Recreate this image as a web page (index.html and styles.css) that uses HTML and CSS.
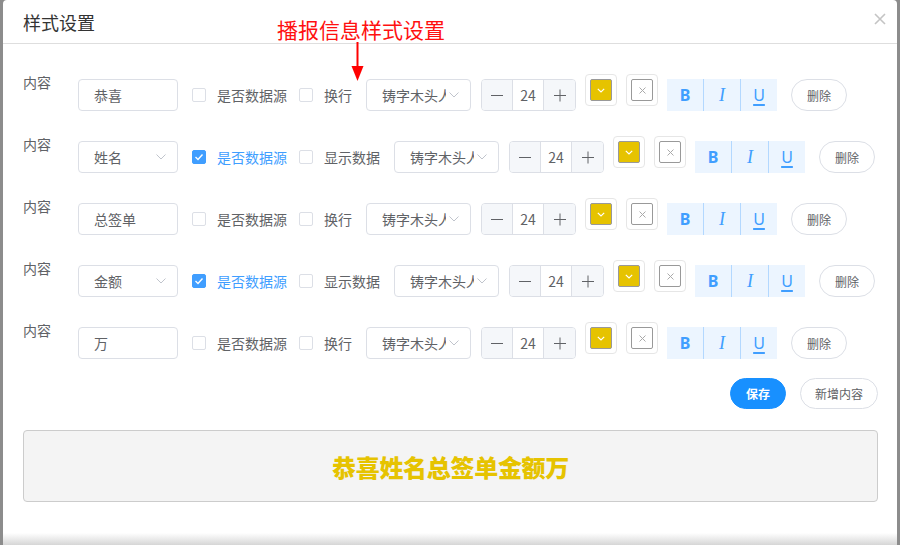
FILE: index.html
```html
<!DOCTYPE html>
<html lang="zh">
<head>
<meta charset="utf-8">
<link rel="stylesheet" href="styles.css">
</head>
<body>
<div class="dialog">
  <div class="header">
    <span class="title">样式设置</span>
    <svg class="close" width="12" height="12" viewBox="0 0 12 12"><path d="M1 1L11 11M11 1L1 11" stroke="#c4c4c4" stroke-width="1.6" fill="none"/></svg>
  </div>
  <div class="note">播报信息样式设置</div>
  <svg class="arrow" width="14" height="39" viewBox="0 0 14 39"><path d="M6.5 0V27" stroke="#f00" stroke-width="2"/><path d="M0.5 24H12.5L6.5 39Z" fill="#f00"/></svg>

  <div class="body">
    <div class="rows">
      <!-- row 1 -->
      <div class="row">
        <span class="label">内容</span>
        <div class="ctl input">恭喜</div>
        <label class="ctl check first"><span class="box"></span><span class="ctext">是否数据源</span></label>
        <label class="ctl check second"><span class="box"></span><span class="ctext">换行</span></label>
        <div class="ctl fsel"><span class="ftext">铸字木头人</span><svg class="chev" width="10" height="6" viewBox="0 0 10 6"><path d="M0.5 0.5L5 5L9.5 0.5" stroke="#c0c4cc" fill="none"/></svg></div>
        <div class="ctl num"><span class="nbtn"><svg width="14" height="14" viewBox="0 0 14 14"><path d="M1 7.5H13" stroke="#606266" stroke-width="1"/></svg></span><span class="nval">24</span><span class="nbtn plus"><svg width="14" height="14" viewBox="0 0 14 14"><path d="M1 7.5H13M7 1.5V13.5" stroke="#606266" stroke-width="1"/></svg></span></div>
        <div class="picker"><span class="swatch yellow"><svg width="8" height="5" viewBox="0 0 8 5"><path d="M0.8 0.8L4 4L7.2 0.8" stroke="#fff" stroke-width="1.2" fill="none"/></svg></span></div>
        <div class="picker"><span class="swatch empty"><svg width="7" height="7" viewBox="0 0 7 7"><path d="M0.5 0.5L6.5 6.5M6.5 0.5L0.5 6.5" stroke="#aaa" stroke-width="1" fill="none"/></svg></span></div>
        <div class="ctl biu"><span class="bb">B</span><span class="bi">I</span><span class="bu">U</span></div>
        <button class="ctl del">删除</button>
      </div>
      <!-- row 2 -->
      <div class="row">
        <span class="label">内容</span>
        <div class="ctl input sel">姓名<svg class="chev" width="10" height="6" viewBox="0 0 10 6"><path d="M0.5 0.5L5 5L9.5 0.5" stroke="#c0c4cc" fill="none"/></svg></div>
        <label class="ctl check first on"><span class="box"><svg width="10" height="8" viewBox="0 0 10 8"><path d="M1.5 4L4 6.5L8.5 1.5" stroke="#fff" stroke-width="1.4" fill="none"/></svg></span><span class="ctext">是否数据源</span></label>
        <label class="ctl check second"><span class="box"></span><span class="ctext">显示数据</span></label>
        <div class="ctl fsel"><span class="ftext">铸字木头人</span><svg class="chev" width="10" height="6" viewBox="0 0 10 6"><path d="M0.5 0.5L5 5L9.5 0.5" stroke="#c0c4cc" fill="none"/></svg></div>
        <div class="ctl num"><span class="nbtn"><svg width="14" height="14" viewBox="0 0 14 14"><path d="M1 7.5H13" stroke="#606266" stroke-width="1"/></svg></span><span class="nval">24</span><span class="nbtn plus"><svg width="14" height="14" viewBox="0 0 14 14"><path d="M1 7.5H13M7 1.5V13.5" stroke="#606266" stroke-width="1"/></svg></span></div>
        <div class="picker"><span class="swatch yellow"><svg width="8" height="5" viewBox="0 0 8 5"><path d="M0.8 0.8L4 4L7.2 0.8" stroke="#fff" stroke-width="1.2" fill="none"/></svg></span></div>
        <div class="picker"><span class="swatch empty"><svg width="7" height="7" viewBox="0 0 7 7"><path d="M0.5 0.5L6.5 6.5M6.5 0.5L0.5 6.5" stroke="#aaa" stroke-width="1" fill="none"/></svg></span></div>
        <div class="ctl biu"><span class="bb">B</span><span class="bi">I</span><span class="bu">U</span></div>
        <button class="ctl del">删除</button>
      </div>
      <!-- row 3 -->
      <div class="row">
        <span class="label">内容</span>
        <div class="ctl input">总签单</div>
        <label class="ctl check first"><span class="box"></span><span class="ctext">是否数据源</span></label>
        <label class="ctl check second"><span class="box"></span><span class="ctext">换行</span></label>
        <div class="ctl fsel"><span class="ftext">铸字木头人</span><svg class="chev" width="10" height="6" viewBox="0 0 10 6"><path d="M0.5 0.5L5 5L9.5 0.5" stroke="#c0c4cc" fill="none"/></svg></div>
        <div class="ctl num"><span class="nbtn"><svg width="14" height="14" viewBox="0 0 14 14"><path d="M1 7.5H13" stroke="#606266" stroke-width="1"/></svg></span><span class="nval">24</span><span class="nbtn plus"><svg width="14" height="14" viewBox="0 0 14 14"><path d="M1 7.5H13M7 1.5V13.5" stroke="#606266" stroke-width="1"/></svg></span></div>
        <div class="picker"><span class="swatch yellow"><svg width="8" height="5" viewBox="0 0 8 5"><path d="M0.8 0.8L4 4L7.2 0.8" stroke="#fff" stroke-width="1.2" fill="none"/></svg></span></div>
        <div class="picker"><span class="swatch empty"><svg width="7" height="7" viewBox="0 0 7 7"><path d="M0.5 0.5L6.5 6.5M6.5 0.5L0.5 6.5" stroke="#aaa" stroke-width="1" fill="none"/></svg></span></div>
        <div class="ctl biu"><span class="bb">B</span><span class="bi">I</span><span class="bu">U</span></div>
        <button class="ctl del">删除</button>
      </div>
      <!-- row 4 -->
      <div class="row">
        <span class="label">内容</span>
        <div class="ctl input sel">金额<svg class="chev" width="10" height="6" viewBox="0 0 10 6"><path d="M0.5 0.5L5 5L9.5 0.5" stroke="#c0c4cc" fill="none"/></svg></div>
        <label class="ctl check first on"><span class="box"><svg width="10" height="8" viewBox="0 0 10 8"><path d="M1.5 4L4 6.5L8.5 1.5" stroke="#fff" stroke-width="1.4" fill="none"/></svg></span><span class="ctext">是否数据源</span></label>
        <label class="ctl check second"><span class="box"></span><span class="ctext">显示数据</span></label>
        <div class="ctl fsel"><span class="ftext">铸字木头人</span><svg class="chev" width="10" height="6" viewBox="0 0 10 6"><path d="M0.5 0.5L5 5L9.5 0.5" stroke="#c0c4cc" fill="none"/></svg></div>
        <div class="ctl num"><span class="nbtn"><svg width="14" height="14" viewBox="0 0 14 14"><path d="M1 7.5H13" stroke="#606266" stroke-width="1"/></svg></span><span class="nval">24</span><span class="nbtn plus"><svg width="14" height="14" viewBox="0 0 14 14"><path d="M1 7.5H13M7 1.5V13.5" stroke="#606266" stroke-width="1"/></svg></span></div>
        <div class="picker"><span class="swatch yellow"><svg width="8" height="5" viewBox="0 0 8 5"><path d="M0.8 0.8L4 4L7.2 0.8" stroke="#fff" stroke-width="1.2" fill="none"/></svg></span></div>
        <div class="picker"><span class="swatch empty"><svg width="7" height="7" viewBox="0 0 7 7"><path d="M0.5 0.5L6.5 6.5M6.5 0.5L0.5 6.5" stroke="#aaa" stroke-width="1" fill="none"/></svg></span></div>
        <div class="ctl biu"><span class="bb">B</span><span class="bi">I</span><span class="bu">U</span></div>
        <button class="ctl del">删除</button>
      </div>
      <!-- row 5 -->
      <div class="row">
        <span class="label">内容</span>
        <div class="ctl input">万</div>
        <label class="ctl check first"><span class="box"></span><span class="ctext">是否数据源</span></label>
        <label class="ctl check second"><span class="box"></span><span class="ctext">换行</span></label>
        <div class="ctl fsel"><span class="ftext">铸字木头人</span><svg class="chev" width="10" height="6" viewBox="0 0 10 6"><path d="M0.5 0.5L5 5L9.5 0.5" stroke="#c0c4cc" fill="none"/></svg></div>
        <div class="ctl num"><span class="nbtn"><svg width="14" height="14" viewBox="0 0 14 14"><path d="M1 7.5H13" stroke="#606266" stroke-width="1"/></svg></span><span class="nval">24</span><span class="nbtn plus"><svg width="14" height="14" viewBox="0 0 14 14"><path d="M1 7.5H13M7 1.5V13.5" stroke="#606266" stroke-width="1"/></svg></span></div>
        <div class="picker"><span class="swatch yellow"><svg width="8" height="5" viewBox="0 0 8 5"><path d="M0.8 0.8L4 4L7.2 0.8" stroke="#fff" stroke-width="1.2" fill="none"/></svg></span></div>
        <div class="picker"><span class="swatch empty"><svg width="7" height="7" viewBox="0 0 7 7"><path d="M0.5 0.5L6.5 6.5M6.5 0.5L0.5 6.5" stroke="#aaa" stroke-width="1" fill="none"/></svg></span></div>
        <div class="ctl biu"><span class="bb">B</span><span class="bi">I</span><span class="bu">U</span></div>
        <button class="ctl del">删除</button>
      </div>
    </div>

    <div class="actions">
      <button class="btn primary">保存</button>
      <button class="btn">新增内容</button>
    </div>

    <div class="preview">恭喜姓名总签单金额万</div>
  </div>
</div>
</body>
</html>
```

FILE: styles.css
```css
* { box-sizing: border-box; }
html, body { margin: 0; padding: 0; }
body {
  background: #8c8c8c;
  font-family: "Noto Sans CJK SC", "Noto Sans", sans-serif;
  width: 900px;
  height: 545px;
  overflow: hidden;
}
.dialog {
  position: relative;
  margin-left: 3px;
  width: 894px;
  height: 545px;
  border-radius: 4px 4px 0 0;
  background: linear-gradient(to bottom, #fff 0, #fff 533px, #d6d6d6 545px);
}
.header {
  height: 44px;
  border-bottom: 1px solid #dedede;
  padding: 1px 11px 0 20px;
  display: flex;
  align-items: center;
  justify-content: space-between;
}
.title {
  font-size: 18px;
  color: #333;
  line-height: 24px;
}
.close { margin-top: -6px; }
.note {
  position: absolute;
  left: 274px;
  top: 16px;
  font-size: 21px;
  line-height: 26px;
  color: #ff1010;
}
.arrow {
  position: absolute;
  left: 348px;
  top: 42px;
}
.body { padding: 30px 19px 0 20px; }
.rows { display: flex; flex-direction: column; gap: 25px; }
.row {
  display: flex;
  align-items: flex-start;
  height: 37px;
  font-size: 14px;
  color: #606266;
}
.label {
  width: 55px;
  line-height: 20px;
  margin-top: -2px;
  flex: none;
}
.ctl {
  margin-top: 5px;
  height: 32px;
  display: flex;
  align-items: center;
  flex: none;
}
.input {
  width: 100px;
  border: 1px solid #dcdfe6;
  border-radius: 4px;
  padding: 0 11px 0 15px;
  justify-content: space-between;
}
.check { margin-left: 14px; cursor: pointer; }
.check.second { margin-left: 12px; }
.box {
  width: 14px;
  height: 14px;
  border: 1px solid #dcdfe6;
  border-radius: 2px;
  margin-right: 11px;
  display: flex;
  align-items: center;
  justify-content: center;
  background: #fff;
}
.check.on .box { background: #409eff; border-color: #409eff; }
.check.on .ctext { color: #409eff; }
.fsel {
  margin-left: 14px;
  width: 105px;
  border: 1px solid #dcdfe6;
  border-radius: 4px;
  padding: 0 11px 0 15px;
  justify-content: space-between;
}
.ftext {
  width: 64px;
  overflow: hidden;
  white-space: nowrap;
}
.num {
  margin-left: 10px;
  width: 95px;
  border: 1px solid #dcdfe6;
  border-radius: 4px;
  overflow: hidden;
}
.nbtn {
  width: 31px;
  height: 100%;
  background: #f5f7fa;
  display: flex;
  align-items: center;
  justify-content: center;
}
.nbtn:first-child { border-right: 1px solid #dcdfe6; }
.nbtn.plus { border-left: 1px solid #dcdfe6; width: 32px; }
.nval { flex: 1; text-align: center; }
.picker {
  margin-left: 9px;
  width: 32px;
  height: 32px;
  border: 1px solid #e6e6e6;
  border-radius: 4px;
  display: flex;
  align-items: center;
  justify-content: center;
  flex: none;
}
.swatch {
  width: 22px;
  height: 22px;
  border: 1px solid #999;
  border-radius: 2px;
  display: flex;
  align-items: center;
  justify-content: center;
}
.swatch.yellow { background: #e6c300; }
.swatch.empty { background: #fff; }
.biu {
  margin-left: 9px;
  width: 110px;
  background: #ecf5ff;
  color: #409eff;
}
.biu span {
  flex: 1;
  height: 100%;
  display: flex;
  align-items: center;
  justify-content: center;
  font-size: 16px;
}
.biu span + span { border-left: 1px solid #b3d8ff; }
.bb { font-family: "Noto Sans", sans-serif; font-weight: 700; }
.bi { font-family: "Liberation Serif", serif; font-style: italic; font-size: 18px !important; }
.bu { font-family: "Noto Sans", sans-serif; text-decoration: underline; text-decoration-thickness: 2px; text-underline-offset: 3px; }
.del {
  margin-left: 14px;
  width: 56px;
  justify-content: center;
  border: 1px solid #dcdfe6;
  border-radius: 16px;
  background: #fff;
  font-family: inherit;
  font-size: 12px;
  color: #606266;
  padding: 0;
}
.actions {
  margin-top: 19px;
  display: flex;
  justify-content: flex-end;
  gap: 14px;
}
.btn {
  height: 31px;
  padding: 0 14px;
  border: 1px solid #dcdfe6;
  border-radius: 16px;
  background: #fff;
  font-family: inherit;
  font-size: 12px;
  color: #606266;
}
.btn.primary {
  width: 56px;
  padding: 0;
  background: #1890ff;
  border-color: #1890ff;
  color: #fff;
  font-weight: 700;
}
.preview {
  margin-top: 21px;
  height: 72px;
  border: 1px solid #ccc;
  border-radius: 4px;
  background: #f4f4f4;
  display: flex;
  align-items: center;
  justify-content: center;
  font-size: 24px;
  font-weight: 900;
  color: #e6c300;
  letter-spacing: -0.3px;
}
```
